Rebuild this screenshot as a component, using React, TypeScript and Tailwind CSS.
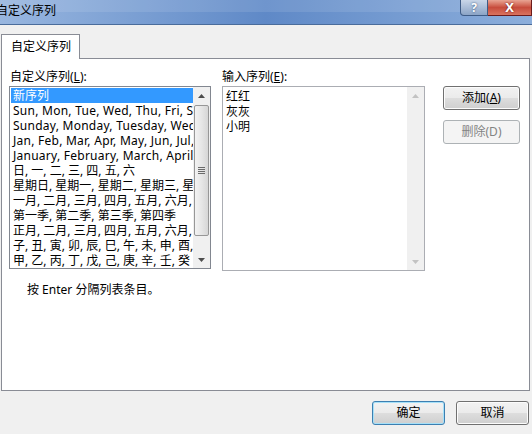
const font = "font-['Noto_Sans','Noto_Sans_CJK_SC',sans-serif]";

const leftItems = [
  { t: "Sun, Mon, Tue, Wed, Thu, Fri, Sat", latin: true },
  { t: "Sunday, Monday, Tuesday, Wednesday, Thursday", latin: true },
  { t: "Jan, Feb, Mar, Apr, May, Jun, Jul, Aug", latin: true },
  { t: "January, February, March, April, May", latin: true },
  { t: "日, 一, 二, 三, 四, 五, 六" },
  { t: "星期日, 星期一, 星期二, 星期三, 星期四" },
  { t: "一月, 二月, 三月, 四月, 五月, 六月, 七月" },
  { t: "第一季, 第二季, 第三季, 第四季" },
  { t: "正月, 二月, 三月, 四月, 五月, 六月, 七月" },
  { t: "子, 丑, 寅, 卯, 辰, 巳, 午, 未, 申, 酉, 戌, 亥" },
  { t: "甲, 乙, 丙, 丁, 戊, 己, 庚, 辛, 壬, 癸" },
];

function Arrow({ up, disabled }: { up?: boolean; disabled?: boolean }) {
  return (
    <svg width="7" height="4" viewBox="0 0 7 4">
      <path d={up ? "M0 4 L3.5 0 L7 4 Z" : "M0 0 L3.5 4 L7 0 Z"} fill={disabled ? "#c2c2c2" : "#4d4d4d"} />
    </svg>
  );
}

function ScrollBar({ disabled }: { disabled?: boolean }) {
  return (
    <div className="flex h-full w-[17px] flex-col bg-[#f0f0f0]">
      <div className="flex h-[17px] items-center justify-center">
        <Arrow up disabled={disabled} />
      </div>
      <div className="flex-1 px-px">
        {!disabled && (
          <div className="mt-px flex h-[131px] items-center justify-center rounded-[2px] border border-[#979797] bg-gradient-to-r from-[#f3f3f3] via-[#e6e6e6] to-[#d6d6d6]">
            <div className="flex flex-col gap-px">
              <div className="h-px w-[7px] bg-[#6a6a6a]" />
              <div className="h-px w-[7px] bg-[#6a6a6a]" />
              <div className="h-px w-[7px] bg-[#6a6a6a]" />
              <div className="h-px w-[7px] bg-[#6a6a6a]" />
            </div>
          </div>
        )}
      </div>
      <div className="flex h-[17px] items-center justify-center">
        <Arrow disabled={disabled} />
      </div>
    </div>
  );
}

function Button({
  label,
  disabled,
  primary,
  wide,
}: {
  label: React.ReactNode;
  disabled?: boolean;
  primary?: boolean;
  wide?: boolean;
}) {
  const base = `flex h-[24px] ${wide ? "w-[77px]" : "w-[73px]"} items-center justify-center rounded-[3px] border text-[12px]`;
  if (disabled)
    return <div className={`${base} border-[#adb2b5] bg-[#f4f4f4] text-[#838383]`}>{label}</div>;
  return (
    <div
      className={`${base} ${primary ? "border-[#3c7fb1] shadow-[inset_0_0_0_1px_#a6e0f8]" : "border-[#707070] shadow-[inset_0_0_0_1px_#fcfcfc]"} text-black`}
      style={{ backgroundImage: "linear-gradient(#f2f2f2 0%, #ebebeb 48%, #dddddd 52%, #cfcfcf 100%)" }}
    >
      {label}
    </div>
  );
}

export default function App() {
  return (
    <div className={`relative h-[434px] w-[532px] overflow-hidden bg-[#f0f0f0] text-[12px] text-black ${font}`}>
      {/* title bar */}
      <div className="relative flex h-[25px] items-start border-b border-[#4a6c9b] bg-gradient-to-r from-[#98b6df] via-[#5f89c7] to-[#8caedb]">
        <div className="absolute inset-x-0 top-0 h-[12px] bg-white/10" />
        <span className="relative ml-[-4px] mt-[3px] text-[12px] leading-[16px]">自定义序列</span>
        <div className="relative ml-auto flex">
          <div className="flex h-[16px] w-[28px] items-center justify-center rounded-bl-[4px] border border-t-0 border-[#3e5c86] bg-gradient-to-b from-[#c9d6e8] to-[#8ba4c6] text-[12px] font-bold leading-none text-white [text-shadow:0_0_2px_#25446e]">
            ?
          </div>
          <div className="flex h-[16px] w-[44px] items-center justify-center border border-l-0 border-t-0 border-[#6b1b1b] bg-gradient-to-b from-[#e8a493] via-[#c74c3c] to-[#d9735f] text-[13px] font-bold leading-none text-white [text-shadow:0_0_2px_#5a1010]">
            X
          </div>
        </div>
      </div>

      {/* tab strip */}
      <div className="mt-[9px] pl-px">
        <div className="relative z-10 -mb-px flex h-[25px] w-[79px] items-center border border-b-0 border-[#898c95] bg-white pl-[9px]">
          自定义序列
        </div>
        <div className="h-[333px] w-[529px] border border-[#898c95] bg-white px-[7px] pt-[10px]">
          <div className="flex">
            {/* left column */}
            <div className="flex w-[202px] flex-col">
              <div className="h-[17px] pl-px leading-[15px]">
                自定义序列(<span className="underline">L</span>):
              </div>
              <div className="flex h-[183px] border border-[#828790] bg-white">
                <div className="flex-1 overflow-hidden whitespace-nowrap py-px pl-px leading-[15px]">
                  <div className="h-[15px] bg-[#3399ff] pl-[2px] text-white">新序列</div>
                  {leftItems.map((it) => (
                    <div key={it.t} className={`h-[15px] pl-[2px] ${it.latin ? "tracking-[0.25px]" : ""}`}>
                      {it.t}
                    </div>
                  ))}
                </div>
                <ScrollBar />
              </div>
              <div className="pl-[18px] pt-[13px] leading-[15px]">按 Enter 分隔列表条目。</div>
            </div>

            {/* right column */}
            <div className="ml-[11px] flex w-[203px] flex-col">
              <div className="h-[17px] leading-[15px]">
                输入序列(<span className="underline">E</span>):
              </div>
              <div className="flex h-[185px] border border-[#abadb3] bg-white">
                <div className="flex-1 py-[2px] pl-[3px] leading-[15px]">
                  <div>红红</div>
                  <div>灰灰</div>
                  <div>小明</div>
                </div>
                <ScrollBar disabled />
              </div>
            </div>

            {/* buttons */}
            <div className="ml-[18px] flex flex-col gap-[10px] pt-[17px]">
              <Button
                wide
                label={
                  <>
                    添加(<span className="underline">A</span>)
                  </>
                }
              />
              <Button wide label="删除(D)" disabled />
            </div>
          </div>
        </div>
      </div>

      {/* dialog buttons */}
      <div className="mt-[10px] flex justify-end gap-[11px] pr-[3px]">
        <Button label="确定" primary />
        <Button label="取消" />
      </div>
    </div>
  );
}
